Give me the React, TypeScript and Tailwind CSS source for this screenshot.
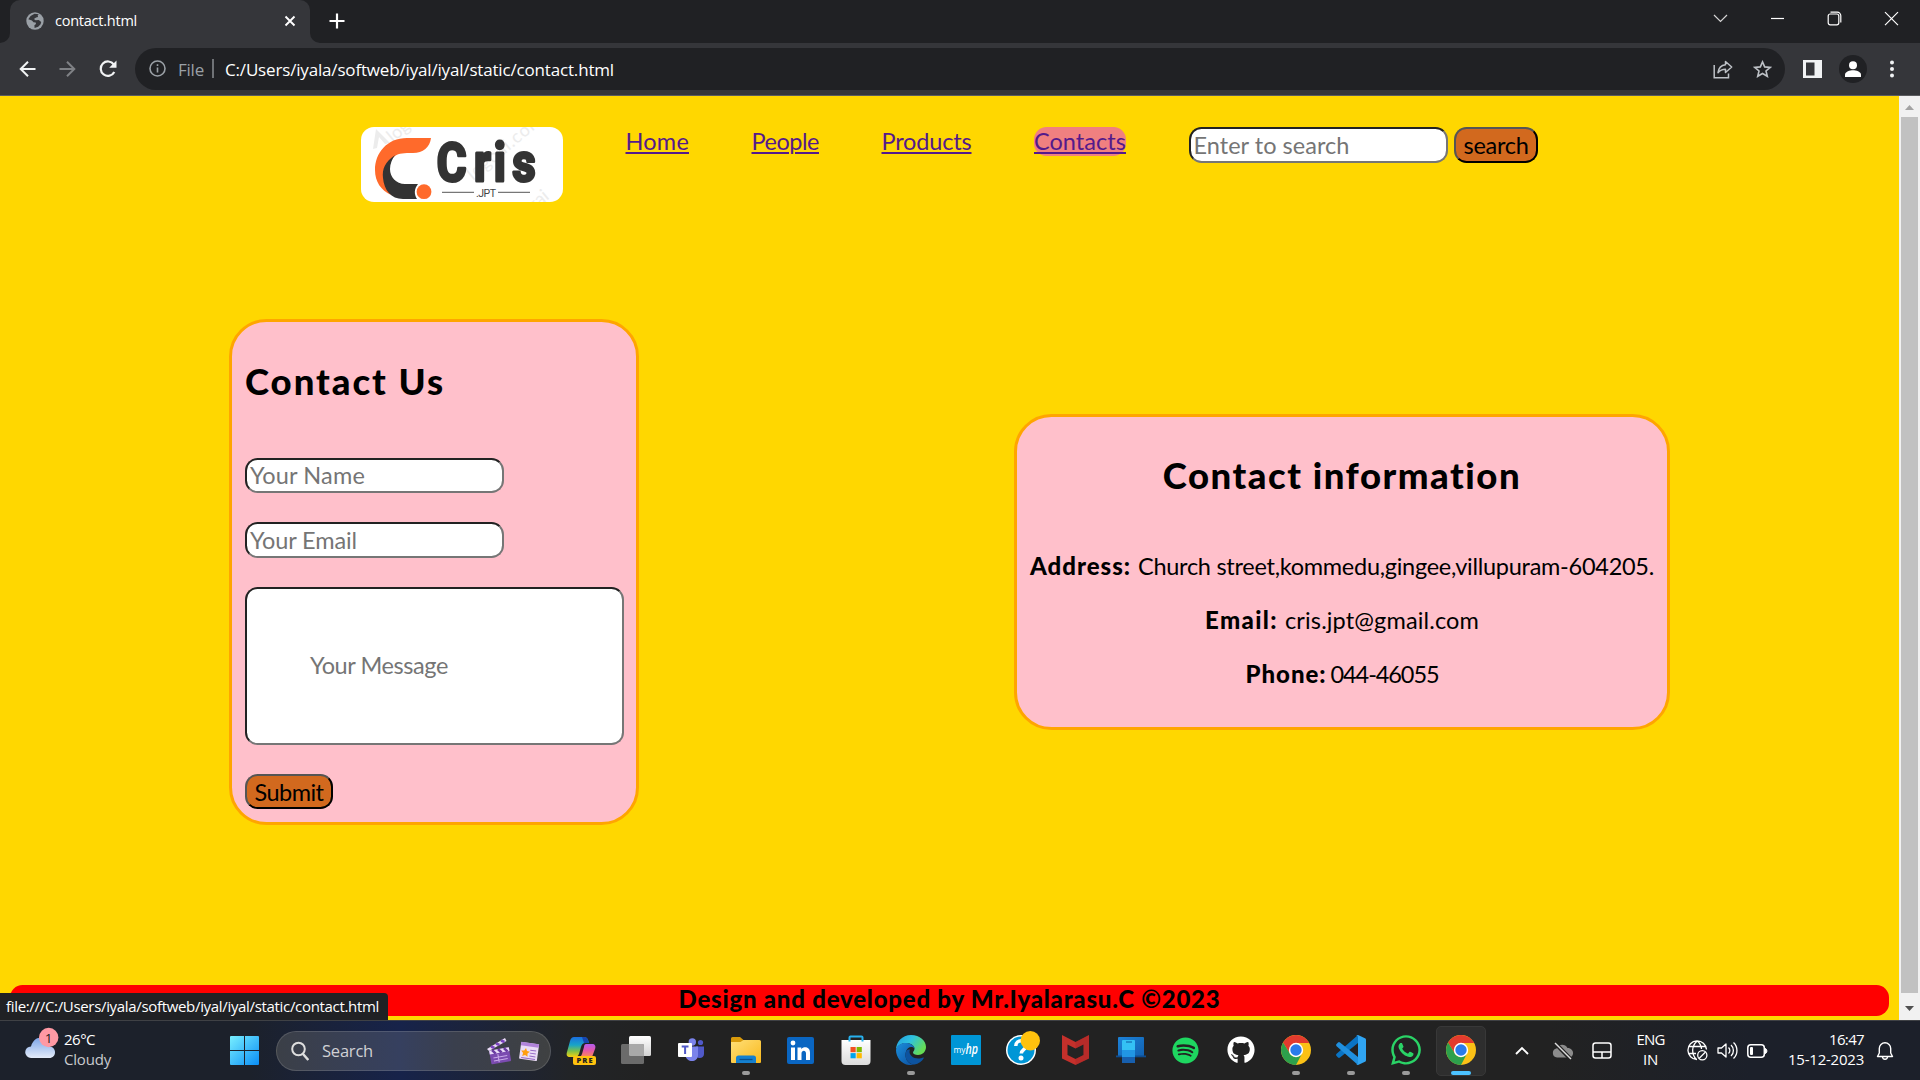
import { useLayoutEffect, useRef, type ReactNode } from "react";
import { FaGithub, FaSpotify, FaWhatsapp } from "react-icons/fa";

/* Single line of text, tracked so that it fills the given width. */
function Fit({ w, className = "", children }: { w: number; className?: string; children: string }) {
  const ref = useRef<HTMLSpanElement>(null);
  useLayoutEffect(() => {
    const el = ref.current;
    if (!el) return;
    el.style.letterSpacing = "0px";
    const natural = el.getBoundingClientRect().width;
    el.style.letterSpacing = `${(w - natural) / children.length}px`;
  }, [w, children]);
  return (
    <span ref={ref} className={`inline-block shrink-0 whitespace-pre ${className}`}>
      {children}
    </span>
  );
}

const UI = "font-['Open_Sans','Noto_Sans',sans-serif]";
const LINE = "leading-[28px]";

function TabStrip() {
  return (
    <div className="flex h-[43px] items-center bg-[#202124] text-white">
      <svg width="10" height="43" className="shrink-0">
        <path d="M10 33a10 10 0 0 1-10 10h10z" fill="#35363a" />
      </svg>
      <div className="flex h-[43px] w-[300px] items-center rounded-t-[10px] bg-[#35363a] pb-[1px] pl-4">
        <svg width="18" height="18" viewBox="0 0 18 18" className="shrink-0">
          <circle cx="9" cy="9" r="8.7" fill="#9aa0a6" />
          <path d="M8.5 1.8 4.6 3.9 2.3 7.2l3.6 1.3 1.6 1.7 2.2.3.3 1.4-1.6 1.4.2 2.6 3.6-1.2 2.4-2.4.6-2.3-2.4-2-3.2.3-1.7-1.3 2.2-1.4 1.9-.7-.3-1.7 1.1-1z" fill="#35363a" />
        </svg>
        <Fit w={82} className="mb-[1px] ml-[11px] text-[14.5px] leading-[18px]">contact.html</Fit>
        <svg width="12" height="12" viewBox="0 0 12 12" className="ml-auto mr-[14px]" stroke="#fff" strokeWidth="1.9">
          <path d="M1.5 1.5l9 9M10.5 1.5l-9 9" />
        </svg>
      </div>
      <svg width="10" height="43" className="shrink-0">
        <path d="M0 33a10 10 0 0 0 10 10H0z" fill="#35363a" />
      </svg>
      <svg width="16" height="16" viewBox="0 0 16 16" className="mb-[1px] ml-[9px]" stroke="#fff" strokeWidth="2.2">
        <path d="M8 .5v15M.5 8h15" />
      </svg>
      <div className="ml-auto flex h-full items-start gap-[42px] pr-[21.500px] pt-[11px]">
        <svg width="15" height="15" viewBox="0 0 15 15" fill="none" stroke="#d5d5d5" strokeWidth="1.2"><path d="M1 4l6.5 6.5L14 4" /></svg>
        <svg width="15" height="15" viewBox="0 0 15 15" stroke="#fff" strokeWidth="1.2"><path d="M1 7.5h13" /></svg>
        <svg width="15" height="15" viewBox="0 0 15 15" fill="none" stroke="#fff" strokeWidth="1.2">
          <rect x="1.2" y="3" width="10.6" height="10.8" rx="2" />
          <path d="M3.5 1.2H10a3.6 3.6 0 0 1 3.8 3.6v6.8" />
        </svg>
        <svg width="15" height="15" viewBox="0 0 15 15" stroke="#fff" strokeWidth="1.2"><path d="M1 1.2l13 13M14 1.2l-13 13" /></svg>
      </div>
    </div>
  );
}

function Toolbar() {
  return (
    <div className="flex h-[53px] items-center border-b border-[#5b5c60] bg-[#35363a] pb-[1px] pl-[19px]">
      <svg width="17" height="18" viewBox="0 0 17 18" fill="none" stroke="#f1f3f4" strokeWidth="2"><path d="M16.500 9H2M9 1.700 1.700 9 9 16.300" /></svg>
      <svg width="17" height="18" viewBox="0 0 17 18" fill="none" stroke="#7f8185" strokeWidth="2" className="ml-[23px]"><path d="M.5 9H15M8 1.700 15.300 9 8 16.300" /></svg>
      <svg width="20" height="20" viewBox="0 0 20 20" fill="none" stroke="#f1f3f4" strokeWidth="2.200" className="ml-[22px]">
        <path d="M16.300 13A7.200 7.200 0 1 1 15.800 5.500" />
        <path d="M18.500 1.500v7.300h-7.300z" fill="#f1f3f4" stroke="none" />
      </svg>
      <div className="ml-[17px] flex h-[42px] w-[1650px] items-center rounded-full bg-[#202124] pl-[14px] pr-[13px]">
        <svg width="17" height="17" viewBox="0 0 17 17" fill="none" stroke="#9aa0a6" strokeWidth="1.600">
          <circle cx="8.500" cy="8.500" r="7.500" /><path d="M8.500 7.500v5M8.500 4.300v1.800" />
        </svg>
        <Fit w={26} className="ml-[12px] mt-[2px] text-[17px] leading-[24px] text-[#9aa0a6]">File</Fit>
        <div className="ml-[8px] h-[19px] w-[2px] bg-[#6f7276]" />
        <Fit w={389} className="ml-[11px] mt-[2px] text-[17px] leading-[24px] text-white">C:/Users/iyala/softweb/iyal/iyal/static/contact.html</Fit>
        <svg width="20" height="19" viewBox="0 0 20 19" fill="none" stroke="#bdc1c6" strokeWidth="1.500" className="ml-auto mt-[1px]">
          <path d="M1.200 5v12.700H15.500V13.500" />
          <path d="M12.500 1.500 18.700 7l-6.200 5.500V9.300C9.500 9.300 7 10.300 5 12.700 5.500 8.500 8 5.200 12.500 4.700z" strokeLinejoin="round" />
        </svg>
        <svg width="19" height="18" viewBox="0 0 19 18" fill="none" stroke="#bdc1c6" strokeWidth="1.600" className="ml-[20px] mt-[1px]">
          <path d="M9.500 1.900l2.200 5 5.500.5-4.200 3.600 1.300 5.300-4.800-2.800-4.800 2.800L6 11 1.800 7.400l5.500-.5z" />
        </svg>
      </div>
      <svg width="19" height="18" className="ml-[18px]"><rect width="19" height="18" fill="#f1f3f4" /><rect x="3" y="2.500" width="8.500" height="13" fill="#35363a" /></svg>
      <svg width="28" height="28" viewBox="0 0 28 28" className="ml-[17px]">
        <circle cx="14" cy="14" r="14" fill="#202124" />
        <circle cx="14" cy="10.200" r="4" fill="#fff" /><path d="M6 22v-2.300c0-3 5-4.400 8-4.400s8 1.400 8 4.400V22z" fill="#fff" />
      </svg>
      <svg width="4" height="18" viewBox="0 0 4 18" fill="#f1f3f4" className="ml-[23px]"><circle cx="2" cy="2.500" r="2" /><circle cx="2" cy="9" r="2" /><circle cx="2" cy="15.500" r="2" /></svg>
    </div>
  );
}

function Logo() {
  return (
    <svg width="202" height="75" viewBox="0 0 202 75" className="shrink-0 rounded-[13px] bg-white">
      <g fill="#ececec" fontFamily="Lato, sans-serif" fontSize="18">
        <text transform="translate(32 16) rotate(-40)">logo</text>
        <text transform="translate(112 54) rotate(-40)" textLength="92">logoai.com</text>
        <text transform="translate(164 92) rotate(-40)">ogai</text>
        <path d="M12 22 15 2l14 14-5 1-6-7-2 11z" />
      </g>
      <path d="M70 11H46C26 11 14 26 14 43c0 12 6 20 16 25-9-13-8-29 4-39 4-3 9-3 18-3 10 0 17-6 18-15z" fill="#ff6a2b" />
      <path d="M34 28C24 35 21 42 22 51c1 12 8 21 20 21h14c-3-5-3-10 1-15H44C35 57 29 50 29 42c0-5 2-10 5-14z" fill="#333" />
      <circle cx="63" cy="64.700" r="7.400" fill="#ff6a2b" />
      <g transform="scale(.86 1)">
        <text x="88 131.500 154.500 176" y="54" fontFamily="Roboto, sans-serif" fontWeight="700" fontSize="53" fill="#333" stroke="#333" strokeWidth="3" strokeLinejoin="round">Cris</text>
      </g>
      <path d="M81 65.300h32M137 65.300h32" stroke="#777" strokeWidth="1.300" />
      <text x="115" y="69.500" textLength="20" fontFamily="Roboto, sans-serif" fontSize="10.500" fill="#444">.JPT</text>
    </svg>
  );
}

function Field({ w, children }: { w: number; children: string }) {
  return (
    <div role="textbox" className={`flex h-[35px] w-[259px] shrink-0 items-center rounded-[12.500px] border-2 border-b-[#767676] border-l-[#222] border-r-[#767676] border-t-[#222] bg-white pb-[1px] pl-[3px] text-[#757575] ${LINE}`}>
      <Fit w={w}>{children}</Fit>
    </div>
  );
}

function Button({ w, children }: { w: number; children: string }) {
  return (
    <button className={`flex h-[35px] items-center rounded-[12.500px] border-2 border-b-black border-l-[#555] border-r-black border-t-[#555] bg-[#d2691e] px-[7.500px] text-black ${LINE}`}>
      <Fit w={w}>{children}</Fit>
    </button>
  );
}

function InfoRow({ label, lw, value, vw, gap }: { label: string; lw: number; value: string; vw: number; gap: string }) {
  return (
    <p className={`flex justify-center ${LINE} ${gap}`}>
      <Fit w={lw} className="text-[24px] font-black">{label}</Fit>
      <Fit w={vw}>{value}</Fit>
    </p>
  );
}

function Page() {
  const link = "text-[#551a8b] underline decoration-2 underline-offset-2";
  return (
    <div className="relative flex h-[924px]">
      <div className="flex w-[1899px] flex-col bg-[#ffd700] font-['Lato',sans-serif] text-[23.500px] text-black">
        <nav className={`flex h-[106px] items-start gap-[62.500px] pl-[361px] pt-[31px] ${LINE}`}>
          <Logo />
          <Fit w={63.5} className={link}>Home</Fit>
          <Fit w={67.5} className={link}>People</Fit>
          <Fit w={90} className={link}>Products</Fit>
          <Fit w={92} className={`h-[29px] rounded-[12.500px] bg-[#f08080] ${link}`}>Contacts</Fit>
          <div className="flex gap-[6.500px] [&>*]:h-[36px]">
            <Field w={156}>Enter to search</Field>
            <Button w={65}>search</Button>
          </div>
        </nav>
        <main className="mt-[117px] flex h-[506px] items-center gap-[375px] pl-[229px]">
          <form className="flex h-[506px] w-[410px] flex-col items-start rounded-[37.500px] border-[3px] border-[#ffa500] bg-[#ffc0cb] pl-[13px]">
            <h2 className="mt-[38px] text-[36.500px] font-black leading-[42px]"><Fit w={200}>Contact Us</Fit></h2>
            <div className="mt-[56px] flex flex-col items-start">
              <Field w={115}>Your Name</Field>
              <div className="mb-[29px] mt-[29px] [&>*]:h-[36px]">
                <Field w={107}>Your Email</Field>
              </div>
              <div role="textbox" className="mb-[29px] flex h-[158px] w-[379px] items-center rounded-[12.500px] border-2 border-b-[#767676] border-l-[#222] border-r-[#767676] border-t-[#222] bg-white pl-[63px] text-[#757575]">
                <Fit w={138}>Your Message</Fit>
              </div>
              <Button w={69}>Submit</Button>
            </div>
          </form>
          <section className="h-[316px] w-[656px] rounded-[37.500px] border-[3px] border-[#ffa500] bg-[#ffc0cb] pt-[37px]">
            <h2 className="mb-[56px] flex justify-center text-[36.500px] font-black leading-[42px]"><Fit w={359}>Contact information</Fit></h2>
            <div className="flex flex-col gap-[26px]">
              <InfoRow label="Address:" lw={101} value="Church street,kommedu,gingee,villupuram-604205." vw={516} gap="gap-[7px]" />
              <InfoRow label="Email:" lw={73} value="cris.jpt@gmail.com" vw={194} gap="gap-[7px]" />
              <InfoRow label="Phone:" lw={81} value="044-46055" vw={108} gap="gap-[4px]" />
            </div>
          </section>
        </main>
        <footer className="mb-[4px] ml-[10px] mr-[10px] mt-auto flex h-[31px] items-center justify-center rounded-[12.500px] bg-[#f00] pb-[3px] text-[24px] font-black leading-[28px]">
          <Fit w={542}>Design and developed by Mr.Iyalarasu.C ©2023</Fit>
        </footer>
      </div>
      <div className="flex w-[21px] flex-col items-center bg-[#f1f1f1]">
        <svg width="21" height="21"><path d="M6 14h9l-4.500-5z" fill="#a3a3a3" /></svg>
        <div className="w-[17px] flex-1 bg-[#c1c1c1]" />
        <svg width="21" height="27"><path d="M6 13h9l-4.500 5z" fill="#505050" /></svg>
      </div>
      <div className={`absolute bottom-0 left-0 flex h-[27px] w-[388px] items-center rounded-tr-[4px] bg-[#202124] pb-[2px] pl-[6px] text-[15px] leading-[20px] text-white ${UI}`}>
        <Fit w={373}>file:///C:/Users/iyala/softweb/iyal/iyal/static/contact.html</Fit>
      </div>
    </div>
  );
}

function Chrome() {
  return (
    <svg width="30" height="30" viewBox="0 0 30 30">
      <circle cx="15" cy="15" r="15" fill="#fbc116" />
      <path d="M2.010 7.500A15 15 0 0 1 27.990 7.500L28 8H15L8.900 18.500z" fill="#e33b2e" />
      <path d="M2.010 7.500 8.900 18.500A7 7 0 0 0 20.800 19L15 30A15 15 0 0 1 2.010 7.500z" fill="#2da04c" />
      <circle cx="15" cy="15" r="7.200" fill="#fff" />
      <circle cx="15" cy="15" r="5.700" fill="#2a7bea" />
    </svg>
  );
}

function Slot({ children, mark, active }: { children: ReactNode; mark?: boolean; active?: boolean }) {
  return (
    <div className="relative flex h-[60px] w-[55px] shrink-0 items-center justify-center">
      {active && <div className="absolute inset-x-[2.500px] inset-y-[5px] rounded-[5px] border border-[#383838] bg-[#2e2e2e]" />}
      <div className="relative mb-[1px]">{children}</div>
      {mark && <div className="absolute bottom-[6px] h-[4px] w-[8px] rounded-full bg-[#9a9a9a]" />}
      {active && <div className="absolute bottom-[6px] h-[4px] w-[20px] rounded-full bg-[#4cc2ff]" />}
    </div>
  );
}

function Apps() {
  return (
    <div className="ml-[2px] flex">
      <Slot>
        <svg width="30" height="30" viewBox="0 0 30 30">
          <defs>
            <linearGradient id="cpa" x1="0" y1="0" x2="0" y2="1"><stop offset="0" stopColor="#1b6ee0" /><stop offset=".4" stopColor="#18a4c8" /><stop offset=".7" stopColor="#7cc04a" /><stop offset="1" stopColor="#f5d10e" /></linearGradient>
            <linearGradient id="cpb" x1="0" y1="0" x2="0" y2="1"><stop offset="0" stopColor="#b45cf0" /><stop offset=".5" stopColor="#e558a8" /><stop offset="1" stopColor="#fb8a55" /></linearGradient>
          </defs>
          <path d="M8 2h10c3 0 4 2 5 6h-4c-2 0-3 1-4 4l-2 7c-1 2-2 3-4 3H4c-3 0-4-2-3-5L4 6c1-3 2-4 4-4z" fill="url(#cpa)" />
          <path d="M16 2h2c3 0 4 2 5 6h-5z" fill="#1746b0" />
          <path d="M20 9h6c3 0 4 2 3 5l-3 8H13c2 0 2-1 3-3l2-7c0-2 1-3 2-3z" fill="url(#cpb)" />
          <rect x="7" y="21" width="23" height="9" rx="2" fill="#ffc20e" />
          <text x="10.500" y="28.300" textLength="16" fontFamily="Open Sans, sans-serif" fontWeight="800" fontSize="7.500" fill="#222">PRE</text>
        </svg>
      </Slot>
      <Slot>
        <svg width="30" height="28" viewBox="0 0 30 28">
          <defs><linearGradient id="tv" x1="0" y1="0" x2="0" y2="1"><stop offset="0" stopColor="#fff" /><stop offset="1" stopColor="#d2d2d2" /></linearGradient></defs>
          <rect x="8" y="0" width="22" height="20" rx="1.500" fill="url(#tv)" />
          <rect x="0" y="8" width="23" height="20" rx="1.500" fill="#6b6b6b" />
          <path d="M8 8h13.500A1.500 1.500 0 0 1 23 9.500V20H9.500A1.500 1.500 0 0 1 8 18.500z" fill="#a9a9a9" />
        </svg>
      </Slot>
      <Slot>
        <svg width="26" height="24" viewBox="0 0 26 24">
          <circle cx="22.500" cy="4.500" r="2.600" fill="#5059c9" /><path d="M18 8.500h8V16c0 4-5 5.500-7.500 2.500z" fill="#5059c9" />
          <circle cx="14.300" cy="4" r="3.700" fill="#7b83eb" /><path d="M8 8.500h12V17c0 8-12 8-12.500 0z" fill="#7b83eb" />
          <rect x="0" y="5" width="14" height="14" rx="1" fill="#fff" />
          <path d="M3.700 8.500h6.800M7.100 8.500v7.500" stroke="#5059c9" strokeWidth="2" />
        </svg>
      </Slot>
      <Slot mark>
        <svg width="30" height="28" viewBox="0 0 30 28">
          <defs><linearGradient id="fe" x1="0" y1="0" x2="1" y2="1"><stop offset="0" stopColor="#ffdf78" /><stop offset="1" stopColor="#f9b91c" /></linearGradient></defs>
          <path d="M0 2.500A1.500 1.500 0 0 1 1.500 1H9l3.500 3H16v5H0z" fill="#d99a0b" />
          <path d="M0 6h9.500l3-2H28.500A1.500 1.500 0 0 1 30 5.500V26a1 1 0 0 1-1 1H1a1 1 0 0 1-1-1z" fill="url(#fe)" />
          <path d="M5 27v-5a2.500 2.500 0 0 1 2.500-2.500h15A2.500 2.500 0 0 1 25 22v5z" fill="#1580cf" />
          <path d="M8.500 23.500h13" stroke="#0b4f8d" strokeWidth="1.300" />
        </svg>
      </Slot>
      <Slot>
        <svg width="27" height="27" viewBox="0 0 27 27">
          <rect width="27" height="27" rx="2" fill="#0a66c2" />
          <g fill="#fff"><circle cx="6" cy="6" r="2.400" /><path d="M4 10.500h4V23H4zM10.500 10.500h3.800v1.700c2-3 8.700-2.700 8.700 3.300V23h-4v-6.500c0-4-4.500-3.500-4.500 0V23h-4z" /></g>
        </svg>
      </Slot>
      <Slot>
        <svg width="30" height="30" viewBox="0 0 30 30">
          <defs><linearGradient id="ms" x1="0" y1="0" x2="0" y2="1"><stop offset="0" stopColor="#fff" /><stop offset="1" stopColor="#dcdcdc" /></linearGradient></defs>
          <path d="M8.500 7V2.500a1 1 0 0 1 1-1h11a1 1 0 0 1 1 1V7" fill="none" stroke="#27b1ee" strokeWidth="2" />
          <path d="M.5 5h29v21a4 4 0 0 1-4 4h-21a4 4 0 0 1-4-4z" fill="url(#ms)" />
          <path d="M7.500 5h2v1.500h-2zM20.500 5h2v1.500h-2z" fill="#27b1ee" />
          <path d="M9.500 12h5.200v5.200H9.500z" fill="#f25022" /><path d="M15.600 12h5.200v5.200h-5.200z" fill="#7fba00" />
          <path d="M9.500 18.100h5.200v5.200H9.500z" fill="#00a4ef" /><path d="M15.600 18.100h5.200v5.200h-5.200z" fill="#ffb900" />
        </svg>
      </Slot>
      <Slot mark>
        <svg width="30" height="30" viewBox="0 0 30 30">
          <defs>
            <linearGradient id="eg" x1="0" y1="0" x2="1" y2=".5"><stop offset="0" stopColor="#229be0" /><stop offset=".5" stopColor="#2fc2df" /><stop offset="1" stopColor="#66dd55" /></linearGradient>
            <linearGradient id="eb" x1="0" y1="0" x2="1" y2="1"><stop offset="0" stopColor="#1b8fdc" /><stop offset="1" stopColor="#0c4fa0" /></linearGradient>
          </defs>
          <path d="M0 15C0 7 6 0 15 0s15 6 15 12c0 5-4 8-8 8-3 0-5-1-5-2.500 0-1 1.500-1.500 1.500-4C18.500 11 15 8 10 8 5 8 1 11 0 15z" fill="url(#eg)" />
          <path d="M0 15C1 10 5 8 9.500 8c5 0 9 2.500 9 5.500-3-3-7.500-1-8.500 3C8 23 12 29 18 29.700 8 32 0 24 0 15z" fill="url(#eb)" />
          <path d="M10.500 15.500C7 22 12 29.500 18.500 29.600c4-.8 7.500-3.300 9.200-6.400.3-.6-.2-1-.7-.7-3 1.500-8.500 1.600-11.500-1.500-2-2-2.500-4-1.500-6.500-1.500-.3-2.700 0-3.500 1z" fill="#0d539f" />
        </svg>
      </Slot>
      <Slot>
        <svg width="30" height="30" viewBox="0 0 30 30">
          <rect width="30" height="30" rx="1" fill="#0096d6" />
          <text x="2.500" y="18" textLength="12" lengthAdjust="spacingAndGlyphs" fontFamily="Open Sans, sans-serif" fontSize="9" fill="#fff">my</text>
          <text x="14.500" y="18.500" textLength="12.500" lengthAdjust="spacingAndGlyphs" fontFamily="Open Sans, sans-serif" fontStyle="italic" fontWeight="600" fontSize="14" fill="#fff">hp</text>
        </svg>
      </Slot>
      <Slot>
        <svg width="38" height="38" viewBox="0 0 38 38" className="-m-1">
          <circle cx="19" cy="19" r="15" fill="#fff" /><circle cx="19" cy="19" r="13.500" fill="#0096d6" />
          <path d="M13.800 15c0-7 10.700-6.500 10.700-.7 0 4-5.200 4.200-5.200 8.200" fill="none" stroke="#fff" strokeWidth="3.500" />
          <circle cx="19" cy="27" r="2.500" fill="#fff" />
          <circle cx="28.300" cy="9.700" r="9.700" fill="#ffc20e" />
        </svg>
      </Slot>
      <Slot>
        <svg width="27" height="30" viewBox="0 0 27 30">
          <path d="M0 0l13.500 7L27 0v23.500L13.500 30 0 23.500z" fill="#c5302b" />
          <path d="M5.500 9.500l8 4 8-4V20l-8 4-8-4z" fill="#232323" /><path d="M27 0v23.500L13.500 30v-6l8-4V9.500l-8 4V7z" fill="#8f1d22" opacity=".25" />
        </svg>
      </Slot>
      <Slot>
        <svg width="30" height="26" viewBox="0 0 30 26">
          <defs><linearGradient id="pl" x1="0" y1="0" x2="1" y2="1"><stop offset="0" stopColor="#1c82d8" /><stop offset="1" stopColor="#1160b0" /></linearGradient></defs>
          <rect x="2" y="0" width="26" height="20" rx="1" fill="url(#pl)" /><path d="M0 18.500h30v1.800H0z" fill="#0e4d91" />
          <rect x="6" y="3" width="13" height="23" rx="1" fill="#34c1f5" /><path d="M6 13h13v7H6z" fill="#2196e4" /><path d="M6 20h13v6H6z" fill="#175fae" />
          <path d="M10 5h6" stroke="#0d5ba5" />
        </svg>
      </Slot>
      <Slot><FaSpotify size={27} color="#1ed760" /></Slot>
      <Slot><FaGithub size={28} color="#fff" /></Slot>
      <Slot mark><Chrome /></Slot>
      <Slot mark>
        <svg width="30" height="30" viewBox="0 0 30 30">
          <path d="M22 0v8L4 22.500a1.500 1.500 0 0 1-2 0L.6 21c-.7-.7-.7-1.500 0-2.200z" fill="#0a74c4" />
          <path d="M22 30v-8L4 7.500a1.500 1.500 0 0 0-2 0L.6 9c-.7.700-.7 1.500 0 2.200z" fill="#2090df" />
          <path d="M22 0l7 3.200c.6.300 1 .8 1 1.600v20.400c0 .8-.4 1.300-1 1.600L22 30c-.8 0-1.500-.4-2-1 1 .8 2 .2 2-1V2c0-1.200-1-1.800-2-1 .5-.6 1.200-1 2-1z" fill="#30a5f3" />
        </svg>
      </Slot>
      <Slot mark><FaWhatsapp size={34} color="#2ad366" className="-m-1" /></Slot>
      <Slot active><Chrome /></Slot>
    </div>
  );
}

function Taskbar() {
  const s = "mb-[3px] text-[15px] leading-[20px]";
  return (
    <div className="flex h-[60px] items-center border-t border-[#3f4145] bg-[linear-gradient(90deg,#1c212b_0px,#1c212b_250px,#17234a_400px,#222427_570px,#222222_650px,#222222_1550px,#1c202a_1750px,#1c202a_1920px)] text-white">
      <svg width="34" height="34" viewBox="0 0 34 34" className="mb-[15px] ml-[25px] shrink-0">
        <defs><linearGradient id="cl" x1="0" y1="0" x2="0" y2="1"><stop offset="0" stopColor="#7ea6e8" /><stop offset="1" stopColor="#e4ecfa" /></linearGradient></defs>
        <path d="M6 32a5.800 5.800 0 0 1 0-11.600C8 14 12 11 17 12c5 1 7 5 7 8.400 8 0 8 11.600 0 11.600z" fill="url(#cl)" />
        <circle cx="23.700" cy="11.500" r="9.700" fill="#ff99a4" />
        <text x="23.700" y="16.500" textAnchor="middle" fontFamily="Open Sans, sans-serif" fontSize="13.500" fill="#222">1</text>
      </svg>
      <div className={`ml-[5px] flex w-[61px] flex-col ${s}`}>
        <Fit w={31} className="self-start">26°C</Fit>
        <Fit w={47} className="self-start text-[#c8cace]">Cloudy</Fit>
      </div>
      <svg width="29" height="29" viewBox="0 0 29 29" className="ml-[105px]">
        <defs><linearGradient id="wn" x1="0" y1="0" x2="1" y2="1"><stop offset="0" stopColor="#78efff" /><stop offset="1" stopColor="#0a8df5" /></linearGradient></defs>
        <path d="M0 1a1 1 0 0 1 1-1h13v14H0zM15 0h13a1 1 0 0 1 1 1v13H15zM0 15h14v14H1a1 1 0 0 1-1-1zM15 15h14v13a1 1 0 0 1-1 1H15z" fill="url(#wn)" />
      </svg>
      <div className="ml-[17px] flex h-[40px] w-[275px] items-center rounded-full border border-[#ffffff22] bg-[linear-gradient(90deg,#3b3f47,#36405f_45%,#3a3f4d_65%,#3f4142)] pl-[14px] pr-[9px]">
        <svg width="18" height="20" viewBox="0 0 18 20" fill="none" stroke="#dedede" strokeWidth="2"><circle cx="7.500" cy="8" r="6.300" /><path d="M12 13l5.300 6" strokeWidth="2.500" /></svg>
        <Fit w={51} className="ml-[13px] text-[16.500px] leading-[24px] text-[#d0d1d4]">Search</Fit>
        <svg width="25" height="28" viewBox="0 0 25 28" className="ml-auto">
          <g transform="rotate(-10 12 18)"><rect x="3" y="12" width="20" height="14" rx="1" fill="#7b4bb0" /><path d="M3 12h20v4H3z" fill="#eadcf8" /><path d="M6 12l3 4M12 12l3 4M18 12l3 4" stroke="#6a3ba2" strokeWidth="2.500" /><path d="M6 20h14M6 23h14M11 17v8" stroke="#c9a9ea" /></g>
          <path d="M0 12 18 1l1.500 3L2 14z" fill="#eadcf8" /><path d="M4 9.500l3.500 1.500M9 6.500l3.500 1.500M14 3.500l3.500 1.500" stroke="#7a43bd" strokeWidth="2.500" />
        </svg>
        <svg width="23" height="22" viewBox="0 0 23 22" className="ml-[6px] mt-[2px]">
          <g transform="rotate(8 11 11)"><rect x="2" y="2" width="18" height="17" rx="1" fill="#eadcf6" /><path d="M2 2h18v3.500H2z" fill="#b184da" /><path d="M12 9h6M12 12h6M12 15h6M4 17.500h14" stroke="#9467c4" /><path d="M7.500 7.500l1.400 2.800 3 .4-2.200 2.100.5 3-2.700-1.400-2.700 1.400.5-3-2.200-2.100 3-.4z" fill="#ff9e0f" /></g>
        </svg>
      </div>
      <Apps />
      <svg width="16" height="10" viewBox="0 0 16 10" fill="none" stroke="#fff" strokeWidth="1.900" className="ml-[26px]"><path d="M2 8l6-6 6 6" /></svg>
      <svg width="22" height="18" viewBox="0 0 22 18" className="ml-[22px]">
        <path d="M5 15.500a4.500 4.500 0 0 1-.5-8.900C6 2 13 1 15.500 6c7 0 7.500 9.500 1 9.500z" fill="#8c8c8c" />
        <path d="M3 1l15.500 16" stroke="#222" strokeWidth="4" /><path d="M3 1l16 16" stroke="#ddd" strokeWidth="1.400" />
      </svg>
      <svg width="20" height="17" viewBox="0 0 20 17" fill="none" stroke="#fff" strokeWidth="1.500" className="ml-[18px]"><rect x="1" y="1" width="18" height="15" rx="2.500" /><path d="M1 10h18M10 10v6" /></svg>
      <div className={`ml-[24px] flex w-[29px] flex-col items-center ${s}`}>
        <Fit w={28}>ENG</Fit>
        <Fit w={15}>IN</Fit>
      </div>
      <svg width="21" height="21" viewBox="0 0 21 21" fill="none" stroke="#fff" strokeWidth="1.300" className="ml-[22px]">
        <path d="M10 19.500A9.300 9.300 0 1 1 19.500 9.500M10.300 1c-6 5-6 13-1 18.500M10.300 1c3 2.500 4 5 4.200 8M2 6.500h16.500M2 13.500h7" />
        <circle cx="15.300" cy="15.300" r="4.600" /><path d="M12 18.500l6.500-6.500" />
      </svg>
      <svg width="21" height="19" viewBox="0 0 21 19" fill="none" stroke="#fff" strokeWidth="1.300" className="ml-[9px]">
        <path d="M1 7v5h3.500L9 16V3L4.500 7z" strokeLinejoin="round" /><path d="M11.500 6.500a4 4 0 0 1 0 6" /><path d="M14 4a7.500 7.500 0 0 1 0 11" /><path d="M16.500 1.500a11 11 0 0 1 0 16" />
      </svg>
      <svg width="21" height="14" viewBox="0 0 21 14" className="ml-[9px]"><rect x=".8" y=".8" width="16.500" height="12.400" rx="3" fill="none" stroke="#fff" strokeWidth="1.500" /><rect x="3" y="3" width="3" height="8" rx="1" fill="#fff" /><path d="M18 4.500c2.500 0 2.500 5 0 5z" fill="#fff" stroke="#fff" /></svg>
      <div className={`ml-[20px] flex w-[76px] flex-col items-end ${s}`}>
        <Fit w={35}>16:47</Fit>
        <Fit w={76}>15-12-2023</Fit>
      </div>
      <svg width="18" height="20" viewBox="0 0 18 20" fill="none" stroke="#fff" strokeWidth="1.400" className="ml-[12px]">
        <path d="M1.500 15.500 3.300 12V7.500a5.700 5.700 0 0 1 11.400 0V12l1.800 3.500z" strokeLinejoin="round" /><path d="M6.500 16c.5 3 4.500 3 5 0" />
      </svg>
    </div>
  );
}

export default function App() {
  return (
    <div className={`flex h-[1080px] w-[1920px] flex-col overflow-hidden ${UI}`}>
      <TabStrip />
      <Toolbar />
      <Page />
      <Taskbar />
    </div>
  );
}
